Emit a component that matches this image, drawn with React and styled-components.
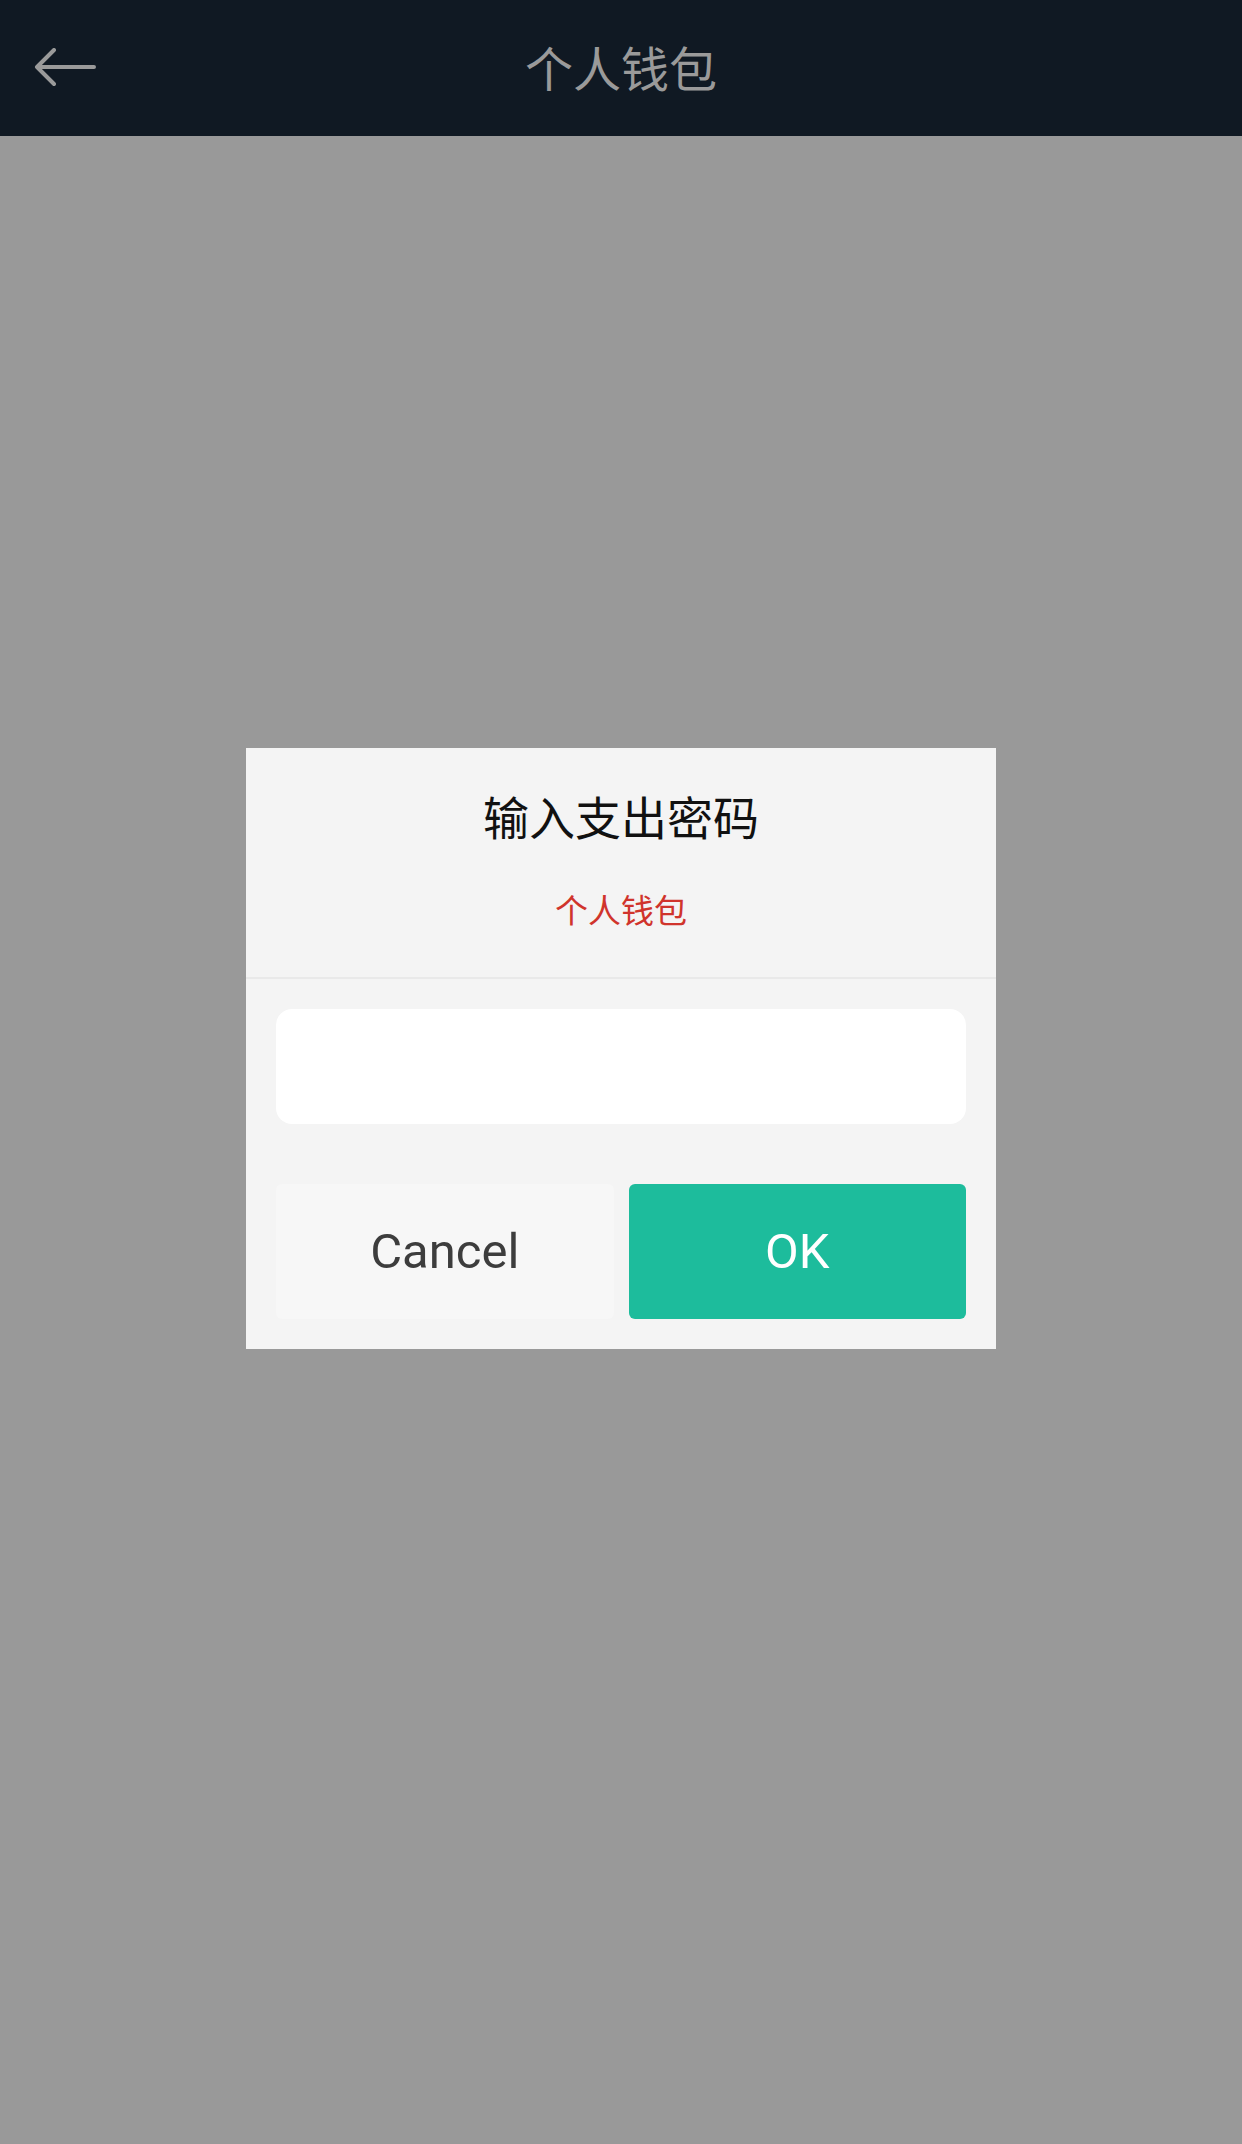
import React from "react";
import styled, { createGlobalStyle } from "styled-components";

const GlobalStyle = createGlobalStyle`
  html, body { margin: 0; padding: 0; }
  body {
    font-family: Roboto, "Noto Sans CJK SC", "Noto Sans", sans-serif;
    background: #999999;
  }
`;

const Page = styled.div`
  width: 1242px;
  height: 2144px;
  display: flex;
  flex-direction: column;
  background: #999999;
`;

const TopBar = styled.header`
  height: 136px;
  flex: none;
  background: #101923;
  display: grid;
  grid-template-columns: 136px 1fr 136px;
  align-items: center;
`;

const BackButton = styled.button`
  border: 0;
  background: transparent;
  padding: 0 0 0 34px;
  height: 100%;
  display: flex;
  align-items: center;
  justify-content: flex-start;
  cursor: pointer;
`;

const Title = styled.h1`
  margin: 0;
  text-align: center;
  font-family: "Noto Sans CJK SC", sans-serif;
  font-weight: 400;
  font-size: 48px;
  color: #9a9a9a;
  line-height: 1;
  padding-bottom: 4px;
`;

const Overlay = styled.main`
  flex: 1;
  display: flex;
  justify-content: center;
  align-items: flex-start;
  padding-top: 612px;
`;

const Dialog = styled.section`
  width: 750px;
  background: #f4f4f4;
  display: flex;
  flex-direction: column;
`;

const DialogHead = styled.div`
  height: 231px;
  border-bottom: 2px solid #e9e9e9;
  display: flex;
  flex-direction: column;
  align-items: center;
  box-sizing: border-box;
  padding-top: 37px;
`;

const DialogTitle = styled.h2`
  margin: 0;
  font-family: "Noto Sans CJK SC", sans-serif;
  font-weight: 400;
  font-size: 46px;
  line-height: 60px;
  color: #111111;
`;

const DialogSub = styled.div`
  margin-top: 44px;
  font-family: "Noto Sans CJK SC", sans-serif;
  font-size: 33px;
  line-height: 40px;
  color: #d0342c;
`;

const DialogBody = styled.div`
  padding: 30px 30px 30px;
  display: flex;
  flex-direction: column;
  gap: 60px;
`;

const PasswordInput = styled.input`
  height: 115px;
  box-sizing: border-box;
  border: 0;
  outline: none;
  border-radius: 16px;
  background: #ffffff;
  font-size: 40px;
  padding: 0 24px;
`;

const Actions = styled.div`
  display: grid;
  grid-template-columns: 1fr 1fr;
  gap: 15px;
`;

const ActionButton = styled.button`
  height: 135px;
  border: 0;
  border-radius: 6px;
  font-family: Roboto, sans-serif;
  font-size: 49px;
  font-weight: 400;
  background: ${(p) => (p.$primary ? "#1dbc9c" : "#f7f7f7")};
  color: ${(p) => (p.$primary ? "#ffffff" : "#3d3d3d")};
  cursor: pointer;
`;

const BackArrow = () => (
  <svg width="62" height="40" viewBox="0 0 62 40" fill="none">
    <path
      d="M60 19H4 M20 2 L3 19 L20 36"
      stroke="#9a9a9a"
      strokeWidth="4"
      strokeLinecap="round"
      strokeLinejoin="round"
    />
  </svg>
);

export default function App() {
  return (
    <Page>
      <GlobalStyle />
      <TopBar>
        <BackButton aria-label="back">
          <BackArrow />
        </BackButton>
        <Title>个人钱包</Title>
        <div />
      </TopBar>
      <Overlay>
        <Dialog>
          <DialogHead>
            <DialogTitle>输入支出密码</DialogTitle>
            <DialogSub>个人钱包</DialogSub>
          </DialogHead>
          <DialogBody>
            <PasswordInput type="password" />
            <Actions>
              <ActionButton>Cancel</ActionButton>
              <ActionButton $primary>OK</ActionButton>
            </Actions>
          </DialogBody>
        </Dialog>
      </Overlay>
    </Page>
  );
}
